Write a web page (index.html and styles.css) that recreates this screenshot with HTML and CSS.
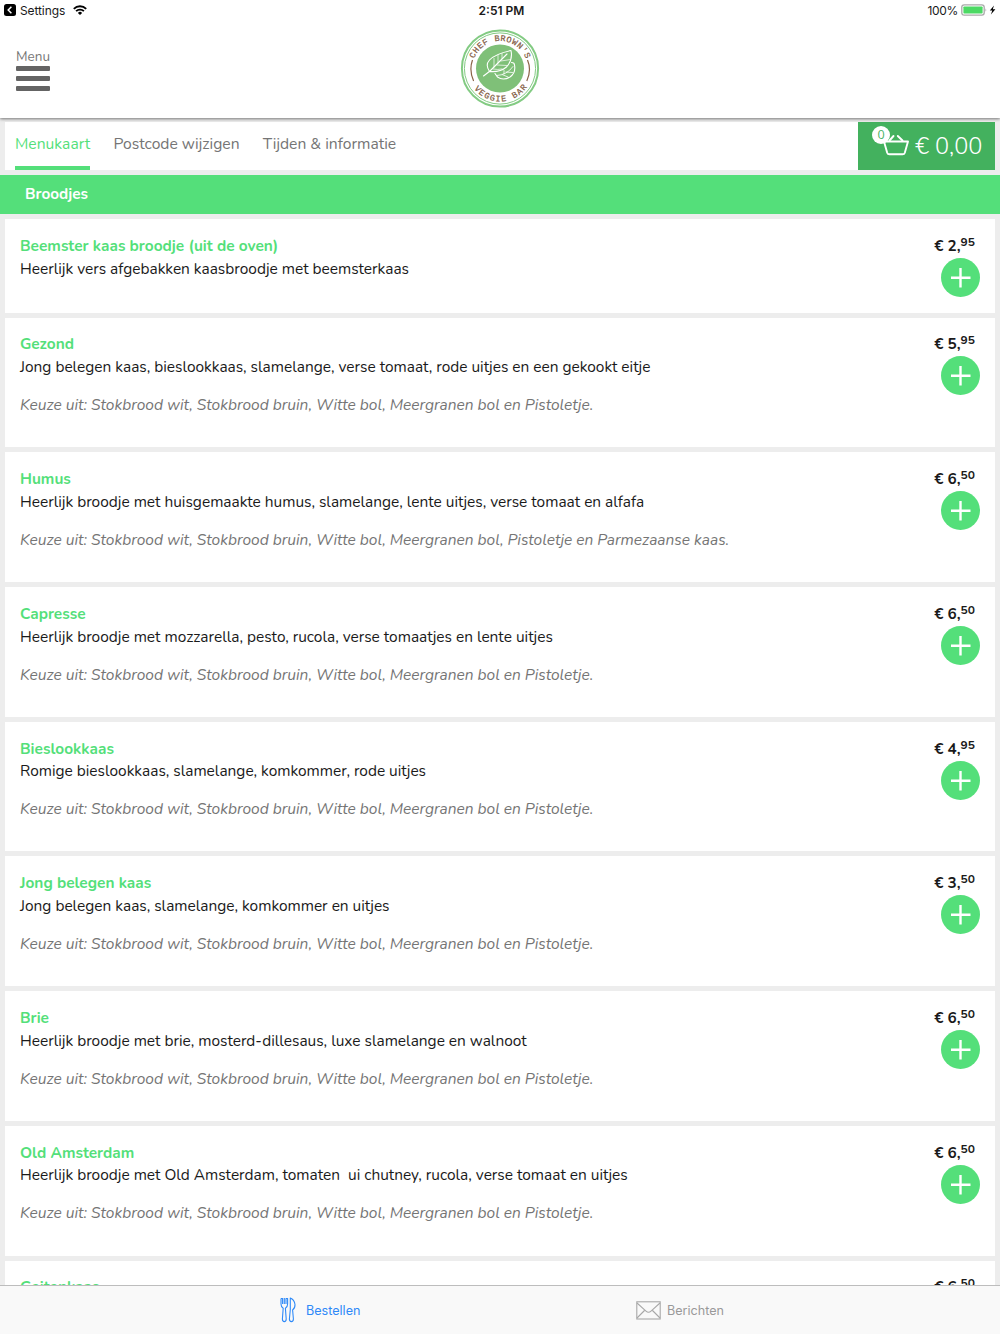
FILE: index.html
```html
<!DOCTYPE html>
<html lang="nl">
  <head>
    <meta charset="UTF-8" />
    <meta name="viewport" content="width=device-width, initial-scale=1.0" />
    <title>Chef Brown's Veggie Bar</title>
    <link rel="stylesheet" href="styles.css">
  </head>
  <body>
    <!-- Shared icons -->
    <svg class="sprite" width="0" height="0">
      <symbol id="plus" viewBox="0 0 39 39">
        <circle cx="19.5" cy="19.5" r="19.5" fill="#54df7a" />
        <path d="M19.5 10v19.5M10 19.8h19.5" stroke="#fff" stroke-width="2.4" />
      </symbol>
    </svg>

    <!-- Status bar -->
    <div class="status-bar">
      <div class="status-left">
        <svg width="12" height="12" viewBox="0 0 12 12">
          <rect width="12" height="12" rx="2.5" fill="#000" />
          <path d="M7.4 2.8L4.2 6l3.2 3.2" fill="none" stroke="#fff" stroke-width="1.5" />
        </svg>
        <span class="settings">Settings</span>
        <svg width="14" height="10" viewBox="0 0 14 10" fill="none" stroke="#000" stroke-width="1.9">
          <path d="M.8 3.8a8.8 8.8 0 0 1 12.4 0M3.1 6.2a5.5 5.5 0 0 1 7.8 0" />
          <path d="M7 10L4.9 7.9a3 3 0 0 1 4.2 0z" fill="#000" stroke="none" />
        </svg>
      </div>
      <div class="clock">2:51 PM</div>
      <div class="status-right">
        <span class="percent">100%</span>
        <svg width="35" height="12" viewBox="0 0 35 12">
          <rect x=".8" y=".8" width="22.4" height="10.4" rx="2.4" fill="#fff" stroke="#a9a9a9" stroke-width="1.3" />
          <rect x="2.4" y="2.4" width="19.2" height="7.2" rx=".8" fill="#4cd964" />
          <path d="M24.5 4.2q1.7 1.8 0 3.6z" fill="#a9a9a9" />
          <path d="M33 1.5L28.8 6.6h2.5l-1.4 4 4.5-5.4h-2.6z" fill="#000" />
        </svg>
      </div>
    </div>

    <!-- Header -->
    <header class="header">
      <div class="menu-button">
        <span>Menu</span>
        <i></i><i></i><i></i>
      </div>
      <svg class="logo" width="80" height="80" viewBox="0 0 80 80">
        <defs>
          <path id="arc-top" d="M12.8 45.5A27.8 27.8 0 1 1 67.2 45.5" />
          <path id="arc-bottom" d="M7.5 40A32.5 32.5 0 0 0 72.5 40" />
        </defs>
        <circle cx="40" cy="39.5" r="38.1" fill="#fff" stroke="#83cb83" stroke-width="2" />
        <circle cx="40" cy="39.5" r="35.6" fill="none" stroke="#83cb83" stroke-width="1" />
        <circle cx="40" cy="39.5" r="24" fill="#7fc078" />
        <path d="M12.5 31Q8.8 41 13.6 52M67.5 31Q71.8 41 66.8 52" fill="none" stroke="#8b6246" stroke-width="1.2" />
        <g class="logo-text">
          <text><textPath href="#arc-top" startOffset="50%" text-anchor="middle" textLength="67">CHEF BROWN'S</textPath></text>
          <text><textPath href="#arc-bottom" startOffset="51%" text-anchor="middle" textLength="62">VEGGIE BAR</textPath></text>
        </g>
        <!-- leaves -->
        <g fill="none" stroke="#fff" stroke-width="1.1" stroke-linecap="round">
          <path d="M23.5 47L30 42L47 25M51 21.5Q35 25 29.5 31Q25 36 29.5 42.5Q40 43.5 46.5 38Q53 31 51 21.5" />
          <path d="M34 38V29.5M38 34V26.5M42 29.5V24.5M33 40Q38 41 42 40M37 36L47 36.5M41 32L50.5 30.5" stroke-width=".7" />
          <path d="M51.5 33.5Q54.5 33.500 54.5 36Q56 44 50 48Q43 52 37.5 48L35 44.5" />
          <path d="M37 46.5Q47 46 53 37.5M42 45.5L48 48M46 43L52.5 43.5M44 41.5V45" stroke-width=".8" />
        </g>
      </svg>
    </header>

    <!-- Tabs and basket -->
    <nav class="tabs">
      <a class="tab active">Menukaart</a>
      <a class="tab postcode">Postcode wijzigen</a>
      <a class="tab info">Tijden &amp; informatie</a>
      <div class="basket">
        <div class="basket-icon">
          <svg width="26" height="22" viewBox="0 0 26 22" fill="none" stroke="#fff" stroke-width="1.9" stroke-linejoin="round" stroke-linecap="round">
            <path d="M1 7.5h24L21.8 18.7Q21.3 20.3 19.5 20.3h-13Q4.7 20.3 4.2 18.7z" />
            <path d="M6.5 6.5L10.5 2M19.5 6.5L14.8 2" />
          </svg>
          <span class="badge">0</span>
        </div>
        <span class="total">€ 0,00</span>
      </div>
    </nav>

    <h2 class="category">Broodjes</h2>

    <!-- Menu items -->
    <main class="items">
      <article class="item short">
        <div class="text">
          <h3>Beemster kaas broodje (uit de oven)</h3>
          <p>Heerlijk vers afgebakken kaasbroodje met beemsterkaas</p>
        </div>
        <div class="buy">
          <div class="price">€ 2,<sup>95</sup></div>
          <svg class="add"><use href="#plus" /></svg>
        </div>
      </article>
      <article class="item">
        <div class="text">
          <h3>Gezond</h3>
          <p>Jong belegen kaas, bieslookkaas, slamelange, verse tomaat, rode uitjes en een gekookt eitje</p>
          <p class="choice">Keuze uit: Stokbrood wit, Stokbrood bruin, Witte bol, Meergranen bol en Pistoletje.</p>
        </div>
        <div class="buy">
          <div class="price">€ 5,<sup>95</sup></div>
          <svg class="add"><use href="#plus" /></svg>
        </div>
      </article>
      <article class="item">
        <div class="text">
          <h3>Humus</h3>
          <p>Heerlijk broodje met huisgemaakte humus, slamelange, lente uitjes, verse tomaat en alfafa</p>
          <p class="choice">Keuze uit: Stokbrood wit, Stokbrood bruin, Witte bol, Meergranen bol, Pistoletje en Parmezaanse kaas.</p>
        </div>
        <div class="buy">
          <div class="price">€ 6,<sup>50</sup></div>
          <svg class="add"><use href="#plus" /></svg>
        </div>
      </article>
      <article class="item">
        <div class="text">
          <h3>Capresse</h3>
          <p>Heerlijk broodje met mozzarella, pesto, rucola, verse tomaatjes en lente uitjes</p>
          <p class="choice">Keuze uit: Stokbrood wit, Stokbrood bruin, Witte bol, Meergranen bol en Pistoletje.</p>
        </div>
        <div class="buy">
          <div class="price">€ 6,<sup>50</sup></div>
          <svg class="add"><use href="#plus" /></svg>
        </div>
      </article>
      <article class="item">
        <div class="text">
          <h3>Bieslookkaas</h3>
          <p>Romige bieslookkaas, slamelange, komkommer, rode uitjes</p>
          <p class="choice">Keuze uit: Stokbrood wit, Stokbrood bruin, Witte bol, Meergranen bol en Pistoletje.</p>
        </div>
        <div class="buy">
          <div class="price">€ 4,<sup>95</sup></div>
          <svg class="add"><use href="#plus" /></svg>
        </div>
      </article>
      <article class="item">
        <div class="text">
          <h3>Jong belegen kaas</h3>
          <p>Jong belegen kaas, slamelange, komkommer en uitjes</p>
          <p class="choice">Keuze uit: Stokbrood wit, Stokbrood bruin, Witte bol, Meergranen bol en Pistoletje.</p>
        </div>
        <div class="buy">
          <div class="price">€ 3,<sup>50</sup></div>
          <svg class="add"><use href="#plus" /></svg>
        </div>
      </article>
      <article class="item">
        <div class="text">
          <h3>Brie</h3>
          <p>Heerlijk broodje met brie, mosterd-dillesaus, luxe slamelange en walnoot</p>
          <p class="choice">Keuze uit: Stokbrood wit, Stokbrood bruin, Witte bol, Meergranen bol en Pistoletje.</p>
        </div>
        <div class="buy">
          <div class="price">€ 6,<sup>50</sup></div>
          <svg class="add"><use href="#plus" /></svg>
        </div>
      </article>
      <article class="item">
        <div class="text">
          <h3>Old Amsterdam</h3>
          <p>Heerlijk broodje met Old Amsterdam, tomaten&nbsp; ui chutney, rucola, verse tomaat en uitjes</p>
          <p class="choice">Keuze uit: Stokbrood wit, Stokbrood bruin, Witte bol, Meergranen bol en Pistoletje.</p>
        </div>
        <div class="buy">
          <div class="price">€ 6,<sup>50</sup></div>
          <svg class="add"><use href="#plus" /></svg>
        </div>
      </article>
      <article class="item">
        <div class="text">
          <h3>Geitenkaas</h3>
        </div>
        <div class="buy">
          <div class="price">€ 6,<sup>50</sup></div>
        </div>
      </article>
    </main>

    <!-- Bottom tab bar -->
    <footer class="bottom-bar">
      <a class="bottom-tab order">
        <svg width="16" height="26" viewBox="0 0 16 26" fill="none" stroke="#2f8af8" stroke-width="1.1" stroke-linejoin="round">
          <path d="M1 1.5v5.5q0 3 2.2 4.2l-.8 10.8q0 2.6 1.9 2.6t1.9-2.6L5.4 11.2Q7.6 10 7.6 7V1.5H6V7M1 1.5H2.6V7M4.3 1V7" />
          <path d="M10.3 1v11.5l-.9 9.5q0 2.6 2 2.6t2-2.6L12.6 13Q15.2 11 15 7.5Q14.3 2.5 10.3 1z" />
        </svg>
        <span>Bestellen</span>
      </a>
      <a class="bottom-tab messages">
        <svg width="25" height="19" viewBox="0 0 25 19" fill="none" stroke="#a8a8a8" stroke-width="1.1">
          <rect x=".8" y=".8" width="23.4" height="17.2" />
          <path d="M1 2L10 10.2Q12.5 12.4 15 10.2L24 2M1 17L8.5 9.5M24 17L16.5 9.5" />
        </svg>
        <span>Berichten</span>
      </a>
    </footer>
  </body>
</html>
```
FILE: styles.css
```css
* {
  box-sizing: border-box;
}
body {
  margin: 0;
  height: 1334px;
  display: flex;
  flex-direction: column;
  overflow: hidden;
  background: #ededed;
  color: #1a1a1a;
  font-family: Nunito, "Noto Sans", sans-serif;
}
h2,
h3,
p {
  margin: 0;
}
svg {
  display: block;
  flex: none;
}
.sprite {
  position: absolute;
}

/* Status bar */
.status-bar {
  display: grid;
  grid-template-columns: 1fr auto 1fr;
  align-items: center;
  height: 20px;
  flex: none;
  padding: 0 4px;
  background: #fff;
  font: 12px/19px Inter, sans-serif;
  z-index: 2;
}
.status-left,
.status-right {
  display: flex;
  align-items: center;
}
.settings {
  margin: 0 8px 0 4px;
  letter-spacing: -0.1px;
}
.clock {
  font-weight: 600;
  padding-left: 3px;
}
.status-right {
  justify-content: flex-end;
  gap: 3px;
}
.percent {
  letter-spacing: -0.3px;
}

/* Header */
.header {
  display: grid;
  grid-template-columns: 1fr auto 1fr;
  height: 98px;
  flex: none;
  padding: 9px 16px 0;
  background: #fff;
  box-shadow: 0 1px 3px rgba(0, 0, 0, 0.5);
  z-index: 1;
}
.menu-button {
  display: flex;
  flex-direction: column;
  width: 34px;
  padding-top: 18px;
  color: #777;
  font-size: 13.5px;
  line-height: 19px;
}
.menu-button i {
  height: 5px;
  margin-bottom: 5px;
  border-radius: 1px;
  background: #646464;
}
.logo-text {
  font: 8.5px "Liberation Mono", monospace;
  fill: #80583c;
  stroke: #80583c;
  stroke-width: 0.2px;
}

/* Tabs */
.tabs {
  display: flex;
  height: 48px;
  flex: none;
  margin: 4px 5px 5px;
  padding-left: 10px;
  background: #fff;
}
.tab {
  margin-right: 23.3px;
  color: #757575;
  font-size: 15.65px;
  line-height: 45px;
  white-space: nowrap;
}
.tab.active {
  border-bottom: 4px solid #54df7a;
  color: #54df7a;
}
.basket {
  display: flex;
  width: 137px;
  margin-left: auto;
  padding: 12px 0 0 25px;
  background: #43b15e;
  color: #fff;
}
.basket-icon {
  position: relative;
}
.badge {
  position: absolute;
  top: -8px;
  left: -11px;
  width: 18px;
  height: 18px;
  border-radius: 50%;
  background: #fff;
  color: #43b15e;
  font-size: 12px;
  line-height: 18px;
  text-align: center;
}
.total {
  margin-left: 6px;
  font-size: 23.5px;
  font-weight: 350;
  line-height: 25px;
  white-space: nowrap;
}

.category {
  height: 39px;
  flex: none;
  margin-bottom: 5px;
  padding-left: 25px;
  background: #54df7a;
  color: #fff;
  font-size: 15.3px;
  font-weight: 700;
  line-height: 39px;
}

/* Menu items */
.items {
  display: flex;
  flex-direction: column;
  gap: 5px;
  flex: 1;
  min-height: 0;
  overflow: hidden;
  padding: 0 5px;
}
.item {
  display: flex;
  flex: none;
  justify-content: space-between;
  height: 129.7px;
  padding: 15.8px 15px 0;
  background: #fff;
}
.item.short {
  height: 93.7px;
}
.text {
  white-space: nowrap;
  font-size: 15.45px;
  line-height: 22.7px;
}
.text h3 {
  margin-bottom: 1px;
  color: #54df7a;
  font-size: 15.45px;
  font-weight: 700;
  line-height: 21.8px;
}
.text .choice {
  margin-top: 15.2px;
  color: #757575;
  font-size: 15.5px;
  font-style: italic;
}
.buy {
  display: flex;
  flex-direction: column;
  align-items: flex-end;
}
.price {
  padding-right: 5px;
  font-size: 15.3px;
  font-weight: 700;
  line-height: 23px;
}
.price sup {
  font-size: 12px;
  font-weight: 700;
  line-height: 0;
  vertical-align: 5px;
}
.add {
  width: 39px;
  height: 39px;
}

/* Bottom bar */
.bottom-bar {
  display: flex;
  height: 49px;
  flex: none;
  border-top: 1px solid #bdbdbd;
  background: #f9f9f9;
  font: 12.6px/49px Inter, sans-serif;
}
.bottom-tab {
  display: flex;
  align-items: center;
}
.order {
  width: 356px;
  margin-left: 280px;
  gap: 10px;
  color: #2f8af8;
}
.messages {
  gap: 6px;
  color: #999;
}
```
